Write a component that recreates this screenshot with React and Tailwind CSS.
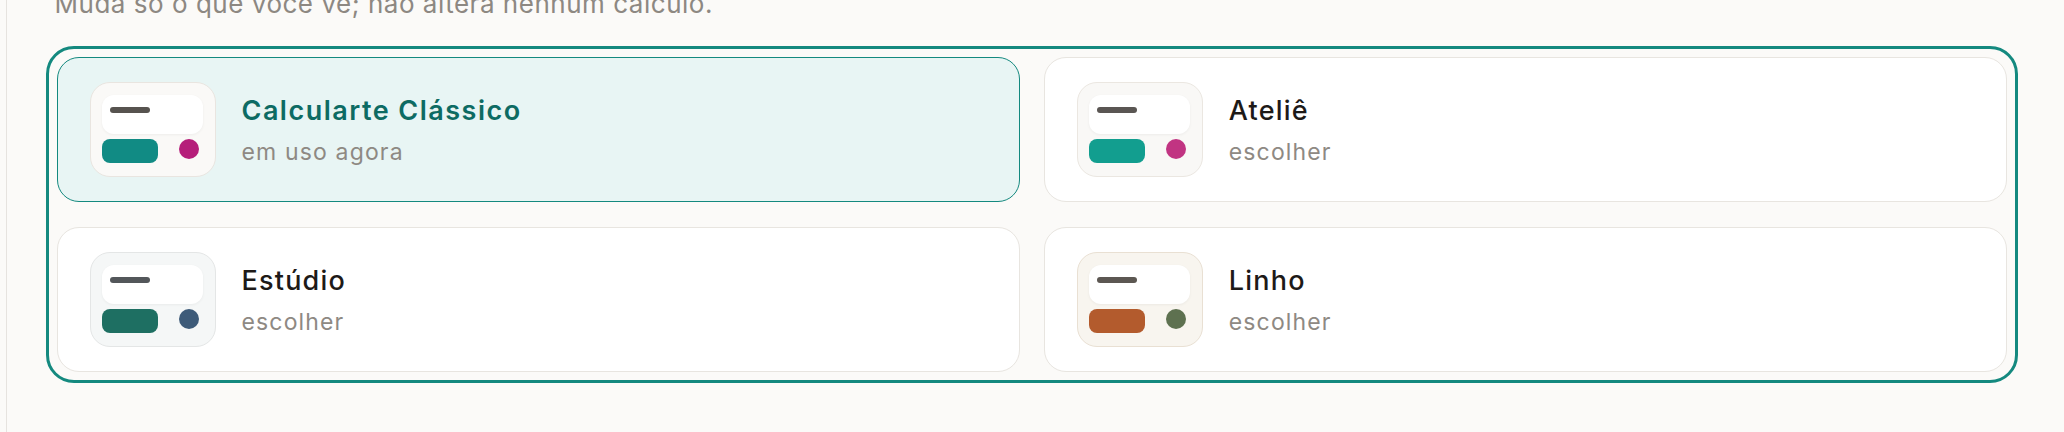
import React from "react";

const themes = [
  {
    name: "Calcularte Clássico",
    sub: "em uso agora",
    selected: true,
    boxBg: "bg-[#faf9f7]",
    boxBorder: "border-[#e9e5e0]",
    line: "bg-[#57534f]",
    pill: "bg-[#118b84]",
    dot: "bg-[#b51e7a]",
  },
  {
    name: "Ateliê",
    sub: "escolher",
    selected: false,
    boxBg: "bg-[#f9f8f6]",
    boxBorder: "border-[#ebe7e1]",
    line: "bg-[#5a5653]",
    pill: "bg-[#129e8f]",
    dot: "bg-[#c13482]",
  },
  {
    name: "Estúdio",
    sub: "escolher",
    selected: false,
    boxBg: "bg-[#f5f7f7]",
    boxBorder: "border-[#e4e6e6]",
    line: "bg-[#53575a]",
    pill: "bg-[#1e6f62]",
    dot: "bg-[#3e5b79]",
  },
  {
    name: "Linho",
    sub: "escolher",
    selected: false,
    boxBg: "bg-[#f8f5ef]",
    boxBorder: "border-[#e9e0d3]",
    line: "bg-[#5c5752]",
    pill: "bg-[#b35b2d]",
    dot: "bg-[#5e7150]",
  },
];

function Swatch({ t }) {
  return (
    <div
      className={`w-[126px] h-[95px] shrink-0 rounded-[20px] border-[1.5px] p-[11.5px] ${t.boxBg} ${t.boxBorder}`}
    >
      <div className="h-[39px] rounded-[12px] bg-white shadow-[0_1px_3px_rgba(0,0,0,0.05)] pl-[8px] pt-[12px]">
        <div className={`w-[40px] h-[6px] rounded-full ${t.line}`} />
      </div>
      <div className="mt-[5px] flex items-start justify-between pr-[4px]">
        <div className={`w-[56px] h-[24px] rounded-[8px] ${t.pill}`} />
        <div className={`w-[20px] h-[20px] rounded-full ${t.dot}`} />
      </div>
    </div>
  );
}

function Card({ t }) {
  return (
    <div
      className={`flex items-center gap-[26px] pl-[32px] pr-8 py-6 rounded-[22px] border-[1.5px] ${
        t.selected ? "bg-[#e8f5f4] border-[#14897f]" : "bg-white border-[#e8e5e0]"
      }`}
    >
      <Swatch t={t} />
      <div className="flex flex-col mt-[3px]">
        <div
          className={`text-[27px] leading-[32px] ${
            t.selected
              ? "font-semibold tracking-[0.055em] text-[#0d6b63]"
              : "font-medium tracking-[0.045em] text-[#1d1a18]"
          }`}
        >
          {t.name}
        </div>
        <div className="mt-[10px] text-[23px] leading-[30px] tracking-[0.05em] text-[#8e8983]">
          {t.sub}
        </div>
      </div>
    </div>
  );
}

export default function App() {
  return (
    <div className="min-h-screen bg-[#fbfaf8] font-['Inter',sans-serif] overflow-hidden">
      <div className="ml-[6px] min-h-[432px] flex flex-col border-l-[1.5px] border-[#e6e3df] pl-[38.5px] pr-[46px]">
        <div className="-mt-[12.5px] mb-[26.5px] ml-[9px] text-[26px] leading-[32px] tracking-[0.02em] text-[#8d8882]">
          Muda só o que você vê; não altera nenhum cálculo.
        </div>
        <div className="grid grid-cols-2 gap-x-[24px] gap-y-[25px] rounded-[28px] border-[3px] border-[#14897f] p-2">
          {themes.map((t) => (
            <Card key={t.name} t={t} />
          ))}
        </div>
      </div>
    </div>
  );
}
